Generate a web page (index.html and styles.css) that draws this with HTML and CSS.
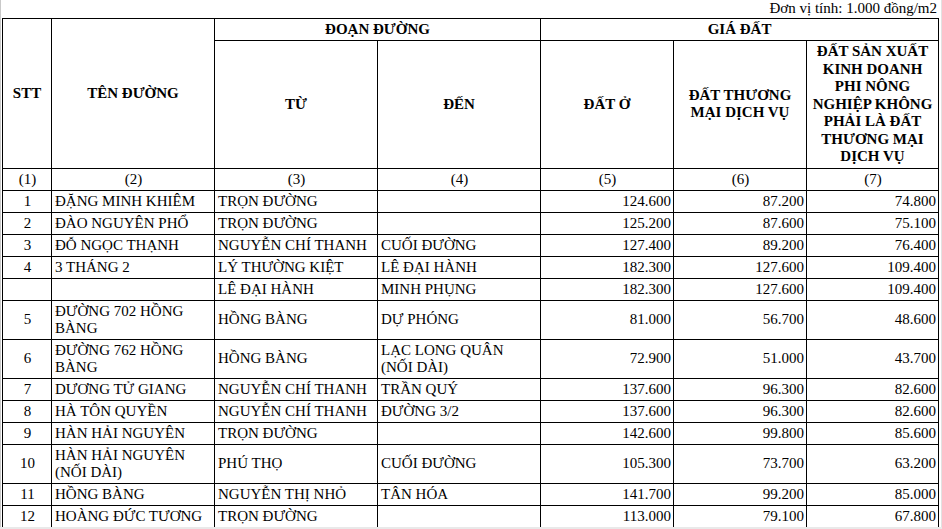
FILE: index.html
```html
<!DOCTYPE html>
<html lang="vi">
<head>
<meta charset="utf-8">
<title>Bảng giá đất</title>
<link rel="stylesheet" href="styles.css">
</head>
<body>
<div class="page">
  <div class="sheet">
    <div class="unit">Đơn vị tính: 1.000 đồng/m2</div>
    <table class="price">
      <colgroup>
        <col class="c-stt"><col class="c-name"><col class="c-from"><col class="c-to"><col class="c-p1"><col class="c-p2"><col class="c-p3">
      </colgroup>
      <thead>
        <tr class="h1">
          <th rowspan="2">STT</th>
          <th rowspan="2">TÊN ĐƯỜNG</th>
          <th colspan="2">ĐOẠN ĐƯỜNG</th>
          <th colspan="3">GIÁ ĐẤT</th>
        </tr>
        <tr class="h2">
          <th>TỪ</th>
          <th>ĐẾN</th>
          <th>ĐẤT Ở</th>
          <th>ĐẤT THƯƠNG<br>MẠI DỊCH VỤ</th>
          <th>ĐẤT SẢN XUẤT<br>KINH DOANH<br>PHI NÔNG<br>NGHIỆP KHÔNG<br>PHẢI LÀ ĐẤT<br>THƯƠNG MẠI<br>DỊCH VỤ</th>
        </tr>
        <tr class="idx">
          <td>(1)</td><td>(2)</td><td>(3)</td><td>(4)</td><td>(5)</td><td>(6)</td><td>(7)</td>
        </tr>
      </thead>
      <tbody>
        <tr><td class="n">1</td><td>ĐẶNG MINH KHIÊM</td><td>TRỌN ĐƯỜNG</td><td></td><td class="r">124.600</td><td class="r">87.200</td><td class="r">74.800</td></tr>
        <tr><td class="n">2</td><td>ĐÀO NGUYÊN PHỔ</td><td>TRỌN ĐƯỜNG</td><td></td><td class="r">125.200</td><td class="r">87.600</td><td class="r">75.100</td></tr>
        <tr><td class="n">3</td><td>ĐỖ NGỌC THẠNH</td><td>NGUYỄN CHÍ THANH</td><td>CUỐI ĐƯỜNG</td><td class="r">127.400</td><td class="r">89.200</td><td class="r">76.400</td></tr>
        <tr><td class="n">4</td><td>3 THÁNG 2</td><td>LÝ THƯỜNG KIỆT</td><td>LÊ ĐẠI HÀNH</td><td class="r">182.300</td><td class="r">127.600</td><td class="r">109.400</td></tr>
        <tr><td class="n"></td><td></td><td>LÊ ĐẠI HÀNH</td><td>MINH PHỤNG</td><td class="r">182.300</td><td class="r">127.600</td><td class="r">109.400</td></tr>
        <tr><td class="n">5</td><td>ĐƯỜNG 702 HỒNG BÀNG</td><td>HỒNG BÀNG</td><td>DỰ PHÓNG</td><td class="r">81.000</td><td class="r">56.700</td><td class="r">48.600</td></tr>
        <tr><td class="n">6</td><td>ĐƯỜNG 762 HỒNG BÀNG</td><td>HỒNG BÀNG</td><td>LẠC LONG QUÂN (NỐI DÀI)</td><td class="r">72.900</td><td class="r">51.000</td><td class="r">43.700</td></tr>
        <tr><td class="n">7</td><td>DƯƠNG TỬ GIANG</td><td>NGUYỄN CHÍ THANH</td><td>TRẦN QUÝ</td><td class="r">137.600</td><td class="r">96.300</td><td class="r">82.600</td></tr>
        <tr><td class="n">8</td><td>HÀ TÔN QUYỀN</td><td>NGUYỄN CHÍ THANH</td><td>ĐƯỜNG 3/2</td><td class="r">137.600</td><td class="r">96.300</td><td class="r">82.600</td></tr>
        <tr><td class="n">9</td><td>HÀN HẢI NGUYÊN</td><td>TRỌN ĐƯỜNG</td><td></td><td class="r">142.600</td><td class="r">99.800</td><td class="r">85.600</td></tr>
        <tr><td class="n">10</td><td>HÀN HẢI NGUYÊN (NỐI DÀI)</td><td>PHÚ THỌ</td><td>CUỐI ĐƯỜNG</td><td class="r">105.300</td><td class="r">73.700</td><td class="r">63.200</td></tr>
        <tr><td class="n">11</td><td>HỒNG BÀNG</td><td>NGUYỄN THỊ NHỎ</td><td>TÂN HÓA</td><td class="r">141.700</td><td class="r">99.200</td><td class="r">85.000</td></tr>
        <tr><td class="n">12</td><td>HOÀNG ĐỨC TƯƠNG</td><td>TRỌN ĐƯỜNG</td><td></td><td class="r">113.000</td><td class="r">79.100</td><td class="r">67.800</td></tr>
      </tbody>
    </table>
  </div>
</div>
</body>
</html>
```
FILE: styles.css
```css
html, body {
  margin: 0;
  padding: 0;
  background: #e9e9e9;
}

.page {
  width: 940px;
  height: 527px;
  background: #ffffff;
  border-left: 1px solid #c9c9c9;
  border-right: 1px solid #e2e2e2;
  overflow: hidden;
}

.sheet {
  padding-left: 1px;
  width: 936px;
  font-family: "Liberation Serif", "Times New Roman", Tinos, serif;
  font-size: 15px;
  color: #000;
}

.unit {
  height: 18px;
  line-height: 17px;
  text-align: right;
  padding-right: 1px;
}

.price {
  border-collapse: collapse;
  table-layout: fixed;
  width: 936px;
  font-family: "Liberation Serif", "Times New Roman", Tinos, serif;
  font-size: 15px;
}

.c-stt { width: 49px; }
.c-name { width: 163px; }
.c-from { width: 163px; }
.c-to { width: 163px; }
.c-p1 { width: 133px; }
.c-p2 { width: 133px; }
.c-p3 { width: 132px; }

.price th,
.price td {
  border: 1px solid #000;
  padding: 2px 2px 2px 3px;
  line-height: 17px;
  vertical-align: middle;
  font-weight: normal;
  text-align: left;
}

.price th {
  font-weight: bold;
  text-align: center;
  padding: 2px 2px;
}

.h2 th {
  line-height: 17.5px;
}

.price .idx td {
  text-align: center;
}

.price td.n {
  text-align: center;
}

.price td.r {
  text-align: right;
  padding-right: 2px;
}
```
